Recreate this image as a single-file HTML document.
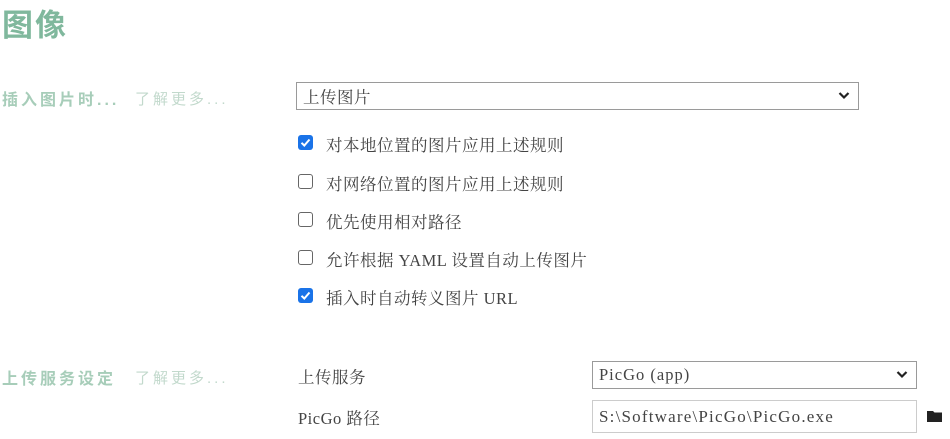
<!DOCTYPE html>
<html><head><meta charset="utf-8"><style>
body{margin:0;width:950px;height:439px;background:#fff;position:relative;overflow:hidden;font-family:"Liberation Serif","Noto Serif CJK SC",serif;color:#444}
.a{position:absolute;white-space:nowrap}
.h{font-family:"Liberation Sans","Noto Sans CJK SC",sans-serif;font-weight:bold;color:#80b89d;font-size:31px;letter-spacing:2px;left:2px;top:0px}
.sec{font-family:"Liberation Sans","Noto Sans CJK SC",sans-serif;font-weight:bold;color:#a7cdb9;font-size:16px;letter-spacing:3px}
.more{font-family:"Liberation Sans","Noto Sans CJK SC",sans-serif;color:#c2d9cc;font-size:15px;letter-spacing:3px}
.box{position:absolute;border:1px solid #9a9a9a;box-sizing:border-box;font-size:16.5px;color:#444;padding-left:6px;display:flex;align-items:center;background:#fff;letter-spacing:0.5px}
.chev{position:absolute;right:8px;top:50%;margin-top:-5px}
.cb{position:absolute;left:298px;width:15px;height:15px;box-sizing:border-box;border-radius:3px}
.on{background:#1a73e8}
.off{border:1.5px solid #666}
.t{position:absolute;left:326px;font-size:16.5px;color:#444;letter-spacing:0.5px}
</style></head><body>
<div class="a h">图像</div>
<div class="a sec" style="left:2px;top:86px">插入图片时...</div>
<div class="a more" style="left:135px;top:88px">了解更多...</div>
<div class="box" style="left:296px;top:82px;width:563px;height:28px">上传图片<svg class="chev" width="12" height="9" viewBox="0 0 12 9"><path d="M1.5 2 6 6.5 10.5 2" stroke="#222" stroke-width="2.2" fill="none"/></svg></div>

<div class="cb on" style="top:135px"><svg width="15" height="15" viewBox="0 0 15 15"><path d="M3.5 7.8 6.3 10.5 11.5 4.5" stroke="#fff" stroke-width="2" fill="none"/></svg></div>
<div class="a t" style="top:132px">对本地位置的图片应用上述规则</div>
<div class="cb off" style="top:174px"></div>
<div class="a t" style="top:171px">对网络位置的图片应用上述规则</div>
<div class="cb off" style="top:212px"></div>
<div class="a t" style="top:209px">优先使用相对路径</div>
<div class="cb off" style="top:250px"></div>
<div class="a t" style="top:247px">允许根据 YAML 设置自动上传图片</div>
<div class="cb on" style="top:288px"><svg width="15" height="15" viewBox="0 0 15 15"><path d="M3.5 7.8 6.3 10.5 11.5 4.5" stroke="#fff" stroke-width="2" fill="none"/></svg></div>
<div class="a t" style="top:285px">插入时自动转义图片 URL</div>

<div class="a sec" style="left:2px;top:365px">上传服务设定</div>
<div class="a more" style="left:135px;top:367px">了解更多...</div>
<div class="a t" style="left:298px;top:364px">上传服务</div>
<div class="a t" style="left:298px;top:405px">PicGo 路径</div>
<div class="box" style="left:592px;top:361px;width:325px;height:28px;letter-spacing:1px">PicGo (app)<svg class="chev" width="12" height="9" viewBox="0 0 12 9"><path d="M1.5 2 6 6.5 10.5 2" stroke="#222" stroke-width="2.2" fill="none"/></svg></div>
<div class="box" style="left:592px;top:400px;width:325px;height:33px;border-color:#ccc;font-size:17px;letter-spacing:1.2px">S:\Software\PicGo\PicGo.exe</div>
<svg class="a" style="left:927px;top:410px" width="16" height="13" viewBox="0 0 16 13"><path d="M0 1h6l1.5 1.5H15V12H0z" fill="#222"/></svg>
</body></html>
